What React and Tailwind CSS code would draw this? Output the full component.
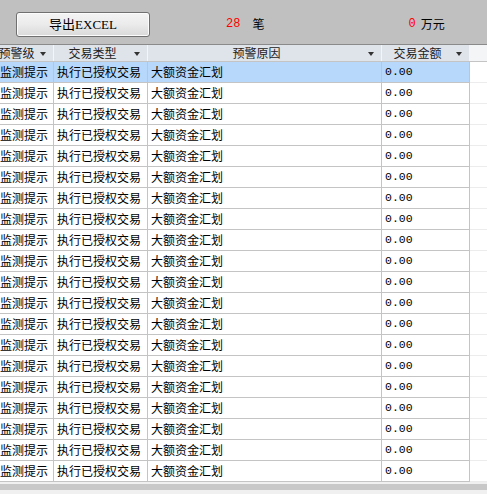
import React from 'react';

const CN = { fontFamily: '"Noto Sans CJK SC", "Noto Sans", sans-serif' };
const MONO = { fontFamily: '"Liberation Mono", "DejaVu Sans Mono", monospace' };

// 列宽：预警级 / 交易类型 / 预警原因 / 交易金额
const COLS = [
  { title: '预警级', w: 'w-[58px]' },
  { title: '交易类型', w: 'w-[94px]' },
  { title: '预警原因', w: 'w-[234px]' },
  { title: '交易金额', w: 'w-[88px]' },
];

const ROWS = Array.from({ length: 20 }).map(() => ({
  level: '监测提示',
  type: '执行已授权交易',
  reason: '大额资金汇划',
  amount: '0.00',
}));

function Arrow() {
  return (
    <span className="absolute right-[7px] top-[7px] w-0 h-0 border-l-[3px] border-r-[3px] border-t-[4px] border-l-transparent border-r-transparent border-t-[#333]" />
  );
}

function HeaderCell({ col }) {
  return (
    <div
      className={`${col.w} relative shrink-0 h-full border-r border-[#f4f5f7] flex items-center justify-center pr-[16px] text-[12px] text-[#222]`}
      style={CN}
    >
      <span className="leading-none whitespace-nowrap">{col.title}</span>
      <Arrow />
    </div>
  );
}

function Row({ r, selected }) {
  return (
    <div className={`flex h-[21px] ${selected ? 'bg-[#b7d8fa]' : 'bg-white'}`}>
      <div className="w-[474px] shrink-0 flex border-b border-[#c4c4c4] -ml-[4px]">
        <div className="w-[58px] shrink-0 border-r border-[#c4c4c4] pl-[4px] flex items-center text-[12px] text-black whitespace-nowrap" style={CN}>
          {r.level}
        </div>
        <div className="w-[94px] shrink-0 border-r border-[#c4c4c4] pl-[3px] flex items-center text-[12px] text-black whitespace-nowrap" style={CN}>
          {r.type}
        </div>
        <div className="w-[234px] shrink-0 border-r border-[#c4c4c4] pl-[3px] flex items-center text-[12px] text-black whitespace-nowrap" style={CN}>
          {r.reason}
        </div>
        <div className="w-[88px] shrink-0 border-r border-[#c4c4c4] pl-[3px] flex items-center text-[11.5px] text-black" style={MONO}>
          {r.amount}
        </div>
      </div>
      <div className="flex-1 bg-white border-b border-[#ececec]" />
    </div>
  );
}

export default function App() {
  return (
    <div className="w-[487px] h-[494px] bg-[#f0f0f0] overflow-hidden">
      {/* 工具栏 */}
      <div className="h-[45px] bg-[#c0c0c0] border-b border-[#8a8a8a] flex items-start">
        <button
          type="button"
          className="ml-[16px] mt-[12px] w-[134px] h-[25px] rounded-[3px] border border-[#707070] bg-gradient-to-b from-[#f4f4f4] via-[#ebebeb] to-[#d9d9d9] shadow-[inset_0_0_0_1px_#fcfcfc] flex items-center justify-center text-[13px] text-black"
          style={{ fontFamily: '"Liberation Serif", "Noto Sans CJK SC", serif' }}
        >
          导出EXCEL
        </button>
        <div className="ml-[76px] mt-[16px] flex items-center h-[16px]">
          <span className="text-[12px] text-[#ff0000]" style={MONO}>28</span>
          <span className="ml-[12px] text-[12px] text-black" style={CN}>笔</span>
        </div>
        <div className="ml-[144px] mt-[16px] flex items-center h-[16px]">
          <span className="text-[12px] text-[#ff0000]" style={MONO}>0</span>
          <span className="ml-[5px] text-[12px] text-black" style={CN}>万元</span>
        </div>
      </div>

      {/* 表头 */}
      <div className="flex h-[17px] border-b border-[#c4c4c4] bg-[#f4f5f7]">
        <div className="flex -ml-[4px] bg-[#dfe3ea] h-full">
          {COLS.map((c) => (
            <HeaderCell key={c.title} col={c} />
          ))}
        </div>
        <div className="flex-1" />
      </div>

      {/* 数据行 */}
      <div>
        {ROWS.map((r, i) => (
          <Row key={i} r={r} selected={i === 0} />
        ))}
      </div>

      {/* 水平滚动条 */}
      <div className="mt-[2px] h-[6px] bg-[#c8c8c8]" />
    </div>
  );
}
